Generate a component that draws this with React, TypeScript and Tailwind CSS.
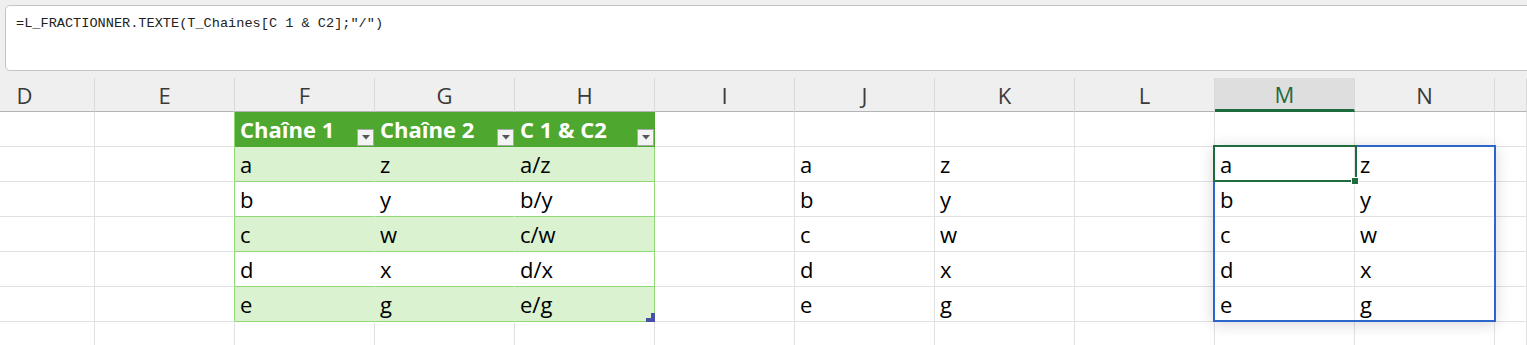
import React from 'react';

const COLS = ['D', 'E', 'F', 'G', 'H', 'I', 'J', 'K', 'L', 'M', 'N', 'O'];

const widthOf = (col: string) => (col === 'D' ? 'w-[95px]' : col === 'O' ? 'w-[32px]' : 'w-[140px]');

const data = [
  ['a', 'z'],
  ['b', 'y'],
  ['c', 'w'],
  ['d', 'x'],
  ['e', 'g'],
];

const FilterButton = () => (
  <div className="absolute right-0 bottom-0 w-[17px] h-[17px] bg-[#f3f3f3] border border-[#a9a9a9] flex items-center justify-center">
    <svg width="8" height="5" viewBox="0 0 8 5">
      <path d="M0 0h8L4 4.5z" fill="#555" />
    </svg>
  </div>
);

const ResizeHandle = () => (
  <svg className="absolute right-[-1px] bottom-[-1px]" width="9" height="9" viewBox="0 0 9 9">
    <path d="M5 0h4v9H0V5h5z" fill="#4552a8" />
  </svg>
);

type CellSpec = { text?: string; className: string; filter?: boolean; handle?: boolean };

// Works out the content and styling of one body cell (row 0 is the table header)
const cellFor = (row: number, col: string): CellSpec => {
  const inTableRows = row <= 5;
  const tableCol = col === 'F' || col === 'G' || col === 'H';
  const band = row % 2 === 1;

  if (inTableRows && row === 0 && tableCol) {
    const title = col === 'F' ? 'Chaîne 1' : col === 'G' ? 'Chaîne 2' : 'C 1 & C2';
    return {
      text: title,
      filter: true,
      className: 'bg-[#4ea72e] border-[#4ea72e] text-white font-bold',
    };
  }

  if (inTableRows && row > 0 && tableCol) {
    const [left, right] = data[row - 1];
    const text = col === 'F' ? left : col === 'G' ? right : `${left}/${right}`;
    const bg = band ? 'bg-[#daf2d0]' : 'bg-white';
    const rightBorder = col === 'H' ? 'border-r-[#8ed973]' : band ? 'border-r-[#daf2d0]' : 'border-r-white';
    return {
      text,
      handle: col === 'H' && row === 5,
      className: `${bg} ${rightBorder} border-b-[#8ed973] text-black`,
    };
  }

  if (col === 'E' && inTableRows) {
    return { className: 'border-b-[#e1e1e1] border-r-[#8ed973]' };
  }

  if (row >= 1 && row <= 5) {
    const [left, right] = data[row - 1];
    if (col === 'J' || col === 'M') return { text: left, className: 'border-[#e1e1e1] text-black' };
    if (col === 'K' || col === 'N') return { text: right, className: 'border-[#e1e1e1] text-black' };
  }

  return { className: 'border-[#e1e1e1]' };
};

const App = () => {
  return (
    <div className="w-[1527px] h-[345px] overflow-hidden bg-white" style={{ fontFamily: '"Open Sans", "Noto Sans", sans-serif' }}>
      {/* Formula bar */}
      <div className="h-[78px] bg-[#efefef] pt-[5px] pl-[5px]">
        <div className="h-[66px] w-[1560px] bg-white border border-[#c4c4c4] rounded-[5px] pl-[10px] pt-[3px]">
          <span className="text-[13.6px] leading-[20px] text-[#222]" style={{ fontFamily: '"Liberation Mono", monospace' }}>
            =L_FRACTIONNER.TEXTE(T_Chaines[C 1 &amp; C2];"/")
          </span>
        </div>
      </div>

      {/* Column headers */}
      <div className="flex bg-[#efefef]">
        {COLS.map((col) => {
          const active = col === 'M';
          return (
            <div
              key={col}
              className={`${widthOf(col)} flex-none h-[34px] flex items-center justify-center text-[22px] leading-[32px] border-r border-r-[#d9d9d9] ${
                active ? 'bg-[#dedede] text-[#1e6b3e] border-b-[3px] border-b-[#1e6b3e]' : 'text-[#3a3a3a] border-b border-b-[#b4b4b4]'
              } ${col === 'D' ? 'pr-[45px]' : ''}`}
            >
              {col === 'O' ? '' : col}
            </div>
          );
        })}
      </div>

      {/* Sheet body */}
      <div className="relative">
        {[0, 1, 2, 3, 4, 5, 6].map((row) => (
          <div key={row} className="flex">
            {COLS.map((col) => {
              const cell = cellFor(row, col);
              return (
                <div
                  key={col}
                  className={`${widthOf(col)} relative flex-none h-[35px] border-r border-b pl-[5px] text-[22px] leading-[34px] whitespace-nowrap ${cell.className}`}
                >
                  {cell.text}
                  {cell.filter && <FilterButton />}
                  {cell.handle && <ResizeHandle />}
                </div>
              );
            })}
          </div>
        ))}

        {/* Selected range M2:N6 */}
        <div className="absolute left-[1213px] top-[33px] w-[283px] h-[177px] border-2 border-[#2c66cc] shadow-[0_2px_14px_rgba(0,0,0,0.16)]" />
        {/* Active cell */}
        <div className="absolute left-[1213px] top-[33px] w-[144px] h-[37px] border-2 border-[#1e6b3e]" />
        <div className="absolute left-[1351px] top-[65px] w-[8px] h-[8px] bg-[#1e6b3e] border border-white" />
      </div>
    </div>
  );
};

export default App;
